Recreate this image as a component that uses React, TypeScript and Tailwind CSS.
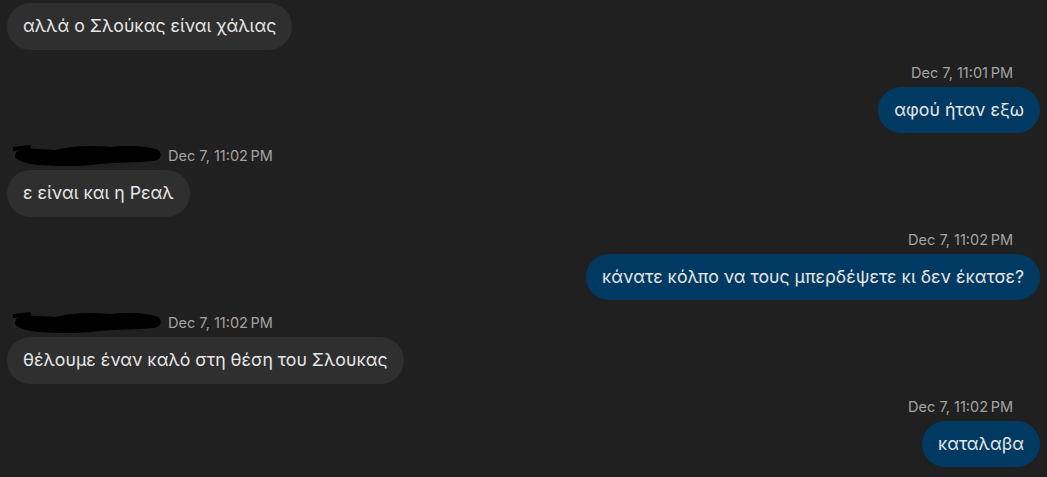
import React from "react";

type Msg = {
  mine: boolean;
  text: string;
  time: string;
  name?: boolean;
};

const messages: Msg[] = [
  { mine: false, text: "αλλά ο Σλούκας είναι χάλιας", time: "" },
  { mine: true, text: "αφού ήταν εξω", time: "Dec 7, 11:01\u202FPM" },
  { mine: false, text: "ε είναι και η Ρεαλ", time: "Dec 7, 11:02\u202FPM", name: true },
  { mine: true, text: "κάνατε κόλπο να τους μπερδέψετε κι δεν έκατσε?", time: "Dec 7, 11:02\u202FPM" },
  { mine: false, text: "θέλουμε έναν καλό στη θέση του Σλουκας", time: "Dec 7, 11:02\u202FPM", name: true },
  { mine: true, text: "καταλαβα", time: "Dec 7, 11:02\u202FPM" },
];

// scribbled-out sender name
const Redacted = () => (
  <svg width="150" height="24" viewBox="0 0 150 24" className="shrink-0">
    <path
      d="M3 8 C10 3 28 5 42 6 C58 2 78 1 98 3 C116 1 134 2 145 6 C150 10 148 16 140 17 C122 19 104 18 86 20 C66 23 44 22 26 21 C14 20 5 17 2 13 Z"
      fill="#000"
    />
    <path d="M1 5 L16 3" stroke="#000" strokeWidth="4" strokeLinecap="round" />
  </svg>
);

const Bubble = ({ m }: { m: Msg }) => (
  <div
    className={`rounded-full px-4 py-[11.25px] text-[17.7px] leading-6 text-[#e6e6e6] whitespace-nowrap ${
      m.mine ? "bg-[#003a62]" : "bg-[#2f2f2f]"
    }`}
  >
    {m.text}
  </div>
);

export default function App() {
  return (
    <div
      className="w-[1047px] h-[477px] overflow-hidden bg-[#202020] px-[7px] pt-[3px]"
      style={{ fontFamily: "Inter, 'Noto Sans', sans-serif" }}
    >
      {messages.map((m, i) => (
        <div key={i} className={`flex flex-col ${m.mine ? "items-end" : "items-start"}`}>
          {m.time && (
            <div
              className={`mt-[13px] mb-1 h-5 flex items-center gap-[5px] text-[14.5px] text-[#a3a3a3] ${
                m.mine ? "pr-[27px]" : "pl-[6px]"
              }`}
            >
              {m.name && <Redacted />}
              <span>{m.time}</span>
            </div>
          )}
          <Bubble m={m} />
        </div>
      ))}
    </div>
  );
}
